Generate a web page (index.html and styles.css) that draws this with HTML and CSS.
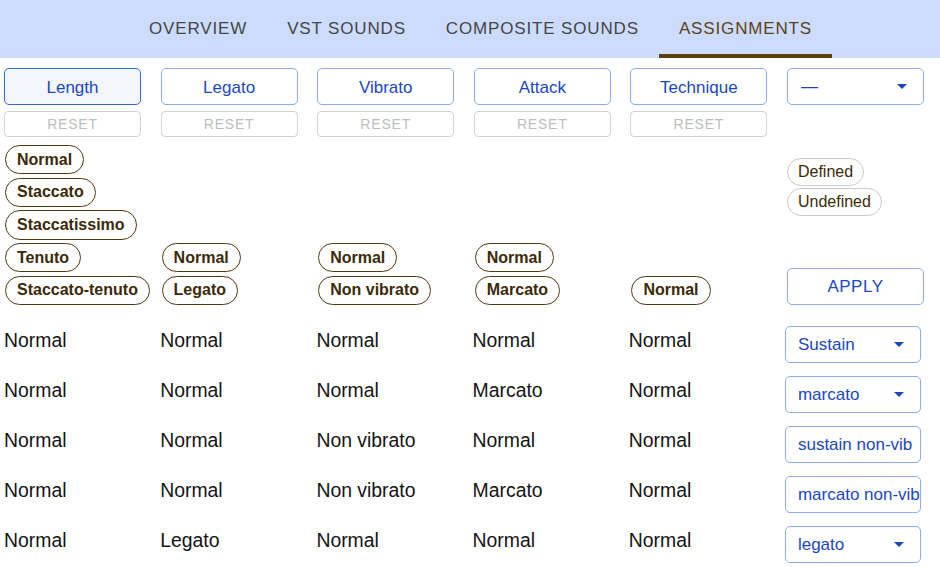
FILE: index.html
```html
<!DOCTYPE html>
<html lang="en">
<head>
<meta charset="utf-8">
<title>Assignments</title>
<link rel="stylesheet" href="styles.css">
</head>
<body>
<header class="tabbar">
  <nav class="tabs">
    <a class="tab">OVERVIEW</a>
    <a class="tab">VST SOUNDS</a>
    <a class="tab">COMPOSITE SOUNDS</a>
    <a class="tab active">ASSIGNMENTS</a>
  </nav>
</header>
<main class="content">
  <section class="filters">
    <div class="col">
      <button class="cat-btn selected">Length</button>
      <button class="reset-btn">RESET</button>
      <div class="chips">
        <span class="chip">Normal</span>
        <span class="chip">Staccato</span>
        <span class="chip">Staccatissimo</span>
        <span class="chip">Tenuto</span>
        <span class="chip">Staccato-tenuto</span>
      </div>
    </div>
    <div class="col">
      <button class="cat-btn">Legato</button>
      <button class="reset-btn">RESET</button>
      <div class="chips">
        <span class="chip">Normal</span>
        <span class="chip">Legato</span>
      </div>
    </div>
    <div class="col">
      <button class="cat-btn">Vibrato</button>
      <button class="reset-btn">RESET</button>
      <div class="chips">
        <span class="chip">Normal</span>
        <span class="chip">Non vibrato</span>
      </div>
    </div>
    <div class="col">
      <button class="cat-btn">Attack</button>
      <button class="reset-btn">RESET</button>
      <div class="chips">
        <span class="chip">Normal</span>
        <span class="chip">Marcato</span>
      </div>
    </div>
    <div class="col">
      <button class="cat-btn">Technique</button>
      <button class="reset-btn">RESET</button>
      <div class="chips">
        <span class="chip">Normal</span>
      </div>
    </div>
    <div class="col col-last">
      <div class="select top-select"><span class="select-value">—</span><span class="caret"></span></div>
      <div class="side-area">
        <div class="state-chips">
          <span class="chip light">Defined</span>
          <span class="chip light">Undefined</span>
        </div>
        <button class="apply-btn">APPLY</button>
      </div>
    </div>
  </section>

  <section class="rows">
    <div class="row">
      <span class="cell">Normal</span><span class="cell">Normal</span><span class="cell">Normal</span><span class="cell">Normal</span><span class="cell">Normal</span>
      <div class="select row-select"><span class="select-value">Sustain</span><span class="caret"></span></div>
    </div>
    <div class="row">
      <span class="cell">Normal</span><span class="cell">Normal</span><span class="cell">Normal</span><span class="cell">Marcato</span><span class="cell">Normal</span>
      <div class="select row-select"><span class="select-value">marcato</span><span class="caret"></span></div>
    </div>
    <div class="row">
      <span class="cell">Normal</span><span class="cell">Normal</span><span class="cell">Non vibrato</span><span class="cell">Normal</span><span class="cell">Normal</span>
      <div class="select row-select text-input"><span class="select-value">sustain non-vib</span></div>
    </div>
    <div class="row">
      <span class="cell">Normal</span><span class="cell">Normal</span><span class="cell">Non vibrato</span><span class="cell">Marcato</span><span class="cell">Normal</span>
      <div class="select row-select text-input"><span class="select-value">marcato non-vib</span></div>
    </div>
    <div class="row">
      <span class="cell">Normal</span><span class="cell">Legato</span><span class="cell">Normal</span><span class="cell">Normal</span><span class="cell">Normal</span>
      <div class="select row-select"><span class="select-value">legato</span><span class="caret"></span></div>
    </div>
  </section>
</main>
</body>
</html>
```

FILE: styles.css
```css
* { box-sizing: border-box; }

html, body {
  margin: 0;
  padding: 0;
  background: #ffffff;
  font-family: "Liberation Sans", Arial, Helvetica, sans-serif;
  overflow: hidden;
}

.tabbar {
  height: 58px;
  background: #cddcfc;
}

.tabs {
  display: flex;
  height: 100%;
  padding-left: 129px;
}

.tab {
  display: flex;
  align-items: center;
  padding: 4px 20px 1px;
  font-size: 17px;
  letter-spacing: 0.85px;
  color: #454545;
  border-bottom: 4px solid transparent;
}

.tab.active {
  color: #5b4216;
  border-bottom-color: #5a3f0c;
}

.content {
  padding: 10px 4px 0;
}

.filters {
  display: grid;
  grid-template-columns: repeat(6, 137px);
  column-gap: 19.6px;
}

.col {
  display: flex;
  flex-direction: column;
}

button {
  font-family: inherit;
  background: #fff;
  cursor: pointer;
}

.cat-btn {
  height: 37px;
  border: 1px solid #8eabec;
  border-radius: 5px;
  color: #1b47c2;
  font-size: 17px;
  padding: 2px 0 0;
}

.cat-btn.selected {
  background: #f4f6fc;
  border-color: #3668d6;
}

.reset-btn {
  margin-top: 6px;
  height: 26px;
  border: 1px solid #d2d2d2;
  border-radius: 4px;
  color: #bdbdbd;
  font-size: 14px;
  letter-spacing: 0.8px;
  padding: 0;
}

.chips {
  margin-top: 8px;
  height: 160px;
  display: flex;
  flex-direction: column;
  justify-content: flex-end;
  align-items: flex-start;
  gap: 3.2px;
}

.chip {
  display: inline-flex;
  align-items: center;
  height: 29.5px;
  padding: 0 11px;
  border: 1.5px solid #4f3914;
  border-radius: 15px;
  font-size: 16px;
  font-weight: bold;
  color: #3c2a08;
  white-space: nowrap;
  margin-left: 1px;
}

.chip.light {
  border: 1px solid #cbcbcb;
  font-weight: normal;
  color: #3c2a08;
  height: 28px;
  padding: 0 10px;
}

.select {
  height: 37px;
  border: 1px solid #8eabec;
  border-radius: 5px;
  display: flex;
  align-items: center;
  justify-content: space-between;
  padding: 0 16px 0 12px;
  color: #1b47c2;
  font-size: 17px;
  overflow: hidden;
  white-space: nowrap;
  background: #fff;
}

.caret {
  width: 0;
  height: 0;
  border-left: 5px solid transparent;
  border-right: 5px solid transparent;
  border-top: 5px solid #1b47c2;
  flex: none;
}

.top-select .select-value { padding-left: 1px; }

.side-area {
  margin-top: 40px;
  height: 160px;
  display: flex;
  flex-direction: column;
  justify-content: space-between;
  align-items: stretch;
  padding-top: 13px;
}

.state-chips {
  display: flex;
  flex-direction: column;
  align-items: flex-start;
  gap: 2px;
}

.state-chips .chip { margin-left: 0; }

.apply-btn {
  height: 37px;
  border: 1px solid #8eabec;
  border-radius: 5px;
  color: #1b47c2;
  font-size: 17px;
  letter-spacing: 0.5px;
  padding: 0;
}

.rows {
  margin-top: 10px;
  display: flex;
  flex-direction: column;
}

.row {
  display: grid;
  grid-template-columns: repeat(6, 137px);
  column-gap: 19.2px;
  height: 50px;
  align-items: start;
}

.cell {
  padding-top: 14px;
  font-size: 19.4px;
  line-height: 22px;
  color: #141414;
}

.row-select {
  margin-top: 11px;
  width: 136px;
}

.text-input {
  padding-right: 0;
}
```
